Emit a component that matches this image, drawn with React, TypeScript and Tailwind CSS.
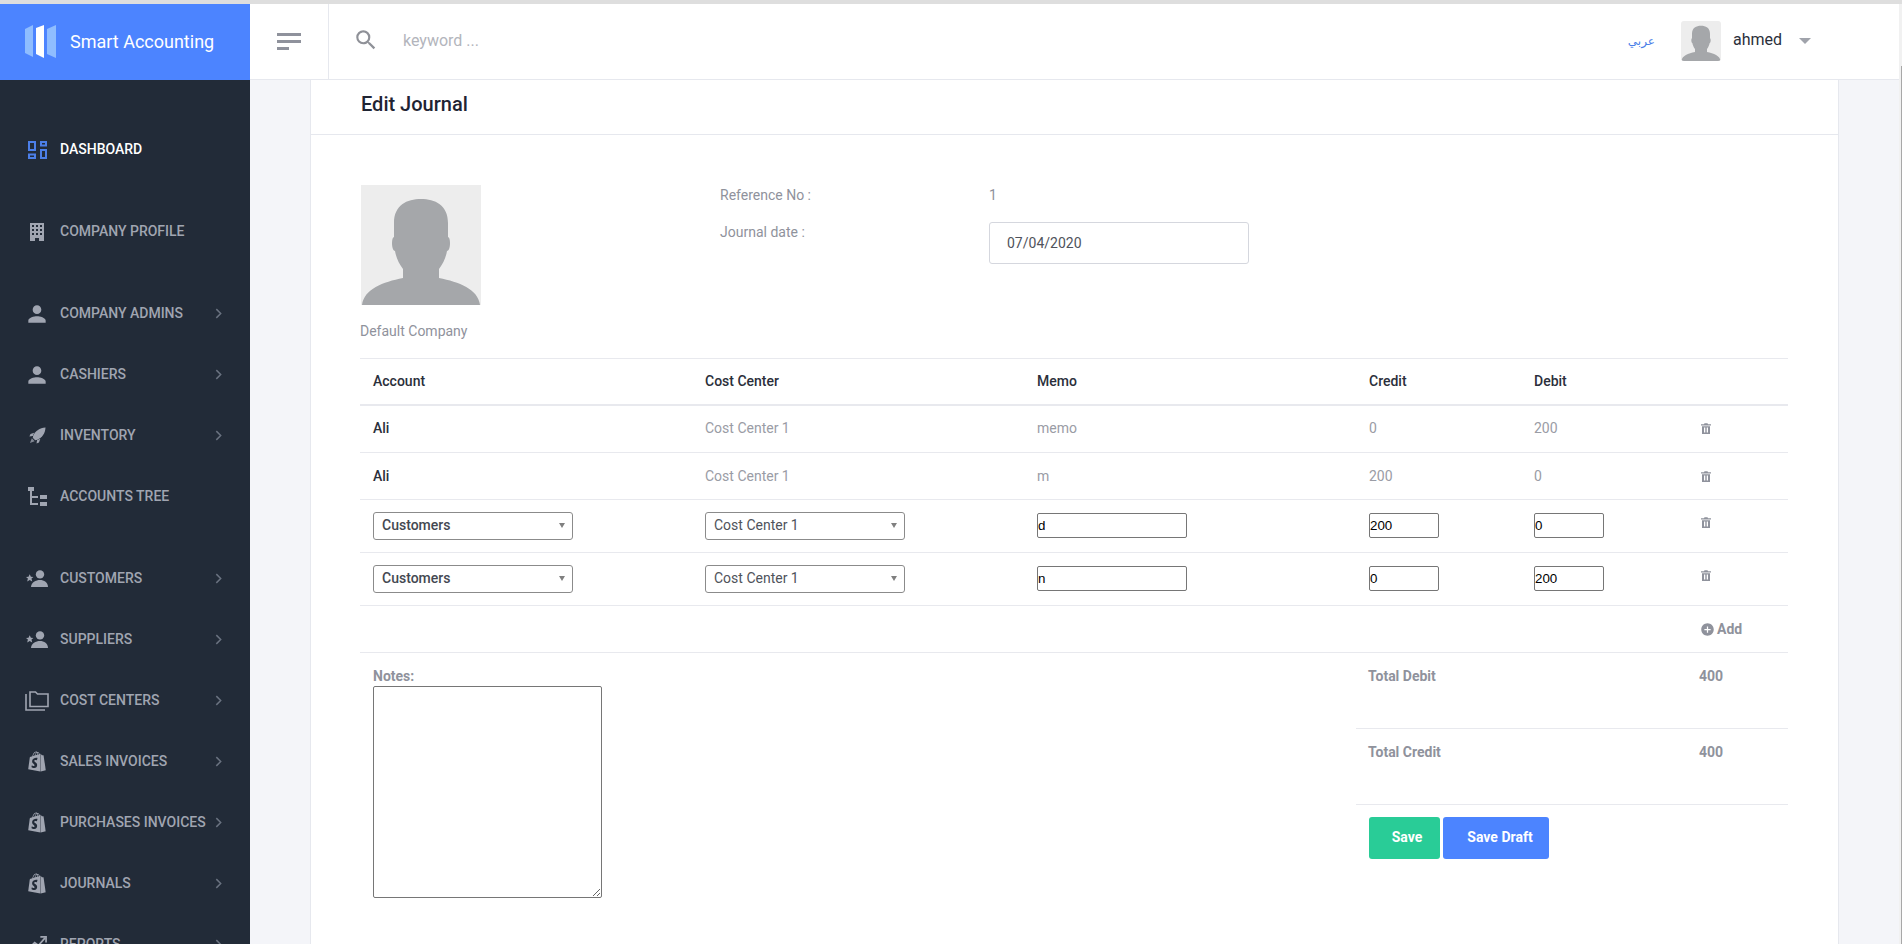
import React, { FunctionComponent, ReactNode } from "react";
import { FaShopify } from "react-icons/fa";
import { MdAddCircle, MdPerson, MdSearch } from "react-icons/md";

const Silhouette: FunctionComponent<{ className: string }> = ({ className }) => (
  <svg viewBox="0 0 120 120" className={className}>
    <rect width="120" height="120" fill="#ededed" />
    <path
      d="M1 120C3 104 22 97 42 93V84C38 79 35 72 34 66C32 66 31 62 31 58C31 54 32 52 33 52V38C33 20 46 14 60 14C74 14 87 20 87 38V52C88 52 89 54 89 58C89 62 88 66 86 66C85 72 82 79 78 84V93C98 97 117 104 119 120Z"
      fill="#a5a7aa"
    />
  </svg>
);

const DashIcon = () => (
  <svg viewBox="0 0 19 18" className="w-[19px] h-[18px]" fill="none" stroke="#4c7fe8" strokeWidth="2">
    <rect x="1" y="1" width="6" height="8" />
    <rect x="13" y="1" width="5" height="3.5" />
    <rect x="1" y="13.5" width="6" height="3.5" />
    <rect x="13" y="9" width="5" height="8" />
  </svg>
);

const BuildingIcon = () => (
  <svg viewBox="0 0 14 18" className="w-[14px] h-[18px]" fill="#a0a5b1">
    <path
      fillRule="evenodd"
      d="M0 0H14V18H9V15H5V18H0ZM2 2V4H4V2ZM6 2V4H8V2ZM10 2V4H12V2ZM2 6V8H4V6ZM6 6V8H8V6ZM10 6V8H12V6ZM2 10V12H4V10ZM6 10V12H8V10ZM10 10V12H12V10Z"
    />
  </svg>
);

const RocketIcon = () => (
  <svg viewBox="0 0 18 18" className="w-[17px] h-[17px]" fill="#a0a5b1">
    <path d="M17.5 0.5C11 1 7 4 4.5 9L4 11.5L6.5 14L9 13.5C14 11 17 7 17.5 0.5Z" />
    <path d="M5.5 6L1.5 7.5L0.5 10L4 9.5Z" />
    <path d="M12 12.5L10.5 16.5L8 17.5L8.5 14Z" />
    <path d="M1 17L3 12L6 15Z" opacity="0.75" />
  </svg>
);

const TreeIcon = () => (
  <svg viewBox="0 0 19 19" className="w-[19px] h-[19px]" fill="#a0a5b1">
    <rect x="0" y="0" width="6" height="4" />
    <rect x="2" y="4" width="2" height="14" />
    <rect x="2" y="9" width="8" height="2" />
    <rect x="2" y="16" width="8" height="2" />
    <rect x="12" y="8" width="7" height="4" />
    <rect x="12" y="15" width="7" height="4" />
  </svg>
);

const StarPersonIcon = () => (
  <svg viewBox="0 0 22 17" className="w-[22px] h-[17px]" fill="#a0a5b1">
    <circle cx="14" cy="4.4" r="4.2" />
    <path d="M5 17C5 12.5 10 10 14 10C18 10 22 12.5 22 17Z" />
    <path d="M3.7 4.2L4.9 6.7L7.4 6.9L5.5 8.6L6.2 11.4L3.7 9.9L1.2 11.4L1.9 8.6L0 6.9L2.5 6.7Z" />
  </svg>
);

const FolderIcon = () => (
  <svg viewBox="0 0 24 20" className="w-[24px] h-[20px]" fill="none" stroke="#a0a5b1" strokeWidth="1.6">
    <path d="M1 3V19H20" />
    <path d="M5 15.5V1H10.5L12.5 3H23V15.5Z" />
  </svg>
);

const ReportsIcon = () => (
  <svg viewBox="0 0 20 20" className="w-[19px] h-[19px]" fill="none" stroke="#a0a5b1" strokeWidth="1.8">
    <path d="M1 14L7 8L11 11L18 3" />
    <path d="M13 2H19V8" />
    <rect x="14" y="13" width="4" height="7" fill="#a0a5b1" stroke="none" />
  </svg>
);

const PersonIcon = () => <MdPerson className="w-[26px] h-[26px] text-[#a0a5b1] shrink-0" />;
const ShopIcon = () => <FaShopify className="w-[18px] h-[21px] text-[#a0a5b1]" />;

const Chevron = () => (
  <svg viewBox="0 0 8 12" className="w-[7px] h-[11px]" fill="none" stroke="#6a7280" strokeWidth="1.7">
    <path d="M1.5 1L6.5 6L1.5 11" />
  </svg>
);

type NavItem = { label: string; icon: ReactNode; arrow?: boolean; gap?: boolean; active?: boolean };

const navItems: NavItem[] = [
  { label: "Dashboard", icon: <DashIcon />, gap: true, active: true },
  { label: "Company Profile", icon: <BuildingIcon />, gap: true },
  { label: "Company Admins", icon: <PersonIcon />, arrow: true },
  { label: "Cashiers", icon: <PersonIcon />, arrow: true },
  { label: "Inventory", icon: <RocketIcon />, arrow: true },
  { label: "Accounts Tree", icon: <TreeIcon />, gap: true },
  { label: "Customers", icon: <StarPersonIcon />, arrow: true },
  { label: "Suppliers", icon: <StarPersonIcon />, arrow: true },
  { label: "Cost Centers", icon: <FolderIcon />, arrow: true },
  { label: "Sales Invoices", icon: <ShopIcon />, arrow: true },
  { label: "Purchases Invoices", icon: <ShopIcon />, arrow: true },
  { label: "Journals", icon: <ShopIcon />, arrow: true },
  { label: "Reports", icon: <ReportsIcon />, arrow: true },
];

const Sidebar = () => (
  <aside className="w-[250px] shrink-0 bg-[#222b38] pt-[39px] overflow-hidden">
    {navItems.map((item) => (
      <div key={item.label} className={`h-[61px] flex items-center ${item.gap ? "mb-[21px]" : ""}`}>
        <span className="w-[60px] shrink-0 flex justify-center pl-[20px] pr-[6px]">{item.icon}</span>
        <span
          className={`text-[14px] font-medium uppercase whitespace-nowrap ${
            item.active ? "text-white" : "text-[#a0a5b1]"
          }`}
        >
          {item.label}
        </span>
        {item.arrow && (
          <span className="ml-auto mr-[28px]">
            <Chevron />
          </span>
        )}
      </div>
    ))}
  </aside>
);

const Header = () => (
  <header className="h-[76px] shrink-0 flex bg-white">
    <div className="w-[250px] shrink-0 bg-[#4c84ff] flex items-center pl-[25px] pb-[1px]">
      <svg viewBox="0 0 31 33" className="w-[31px] h-[33px]">
        <path d="M0 4L8 0V32L0 28Z" fill="#8fbdff" />
        <path d="M11 3L19 0V33L11 29Z" fill="#ffffff" />
        <path d="M22 4L31 0V33L22 29Z" fill="#8fbdff" />
      </svg>
      <span className="ml-[14px] text-[18px] text-white whitespace-nowrap">Smart Accounting</span>
    </div>
    <div className="flex-1 flex border-b border-[#e6e8ee]">
      <div className="w-[79px] shrink-0 border-r border-[#e6e8ee] flex items-center justify-center pr-[1px] pb-[1px]">
        <span className="flex flex-col gap-[4px]">
          <span className="block w-[24px] h-[3px] bg-[#8f929c]" />
          <span className="block w-[24px] h-[3px] bg-[#8f929c]" />
          <span className="block w-[12px] h-[3px] bg-[#8f929c]" />
        </span>
      </div>
      <div className="flex-1 flex items-center pl-[24px] pb-[4px]">
        <MdSearch className="w-[26px] h-[26px] text-[#8f9198]" />
        <span className="ml-[24px] pt-[2px] text-[16px] text-[#b3b5bc]">keyword ...</span>
      </div>
      <div className="flex items-center pb-[2px]">
        <span className="text-[12px] text-[#4c7fe8] font-['DejaVu_Sans',sans-serif]">عربي</span>
        <Silhouette className="ml-[26px] w-[40px] h-[40px] rounded-[3px]" />
        <span className="ml-[12px] text-[16px] text-[#2b2f3b] pb-[1px]">ahmed</span>
        <span className="ml-[17px] w-0 h-0 border-x-[6px] border-x-transparent border-t-[6px] border-t-[#a0a3ab]" />
        <span className="w-[88px]" />
      </div>
    </div>
  </header>
);

const Select: FunctionComponent<{ value: string; dark?: boolean }> = ({ value, dark }) => (
  <div
    className={`w-[200px] h-[28px] border border-[#8b8b8b] rounded-[3px] bg-white flex items-center justify-between pl-[8px] pr-[7px] text-[14px] ${
      dark ? "text-[#444851] font-medium" : "text-[#4f535b]"
    }`}
  >
    <span>{value}</span>
    <span className="w-0 h-0 border-x-[3.5px] border-x-transparent border-t-[5px] border-t-[#808080]" />
  </div>
);

const Field: FunctionComponent<{ value: string; width: string }> = ({ value, width }) => (
  <input
    readOnly
    value={value}
    className={`${width} h-[25px] block border border-[#767676] rounded-[2px] px-0 text-[13.33px] text-black font-['Liberation_Sans',sans-serif] outline-none`}
  />
);

const Trash = () => (
  <svg viewBox="0 0 10 11" className="w-[10px] h-[11px]" fill="#8f929c">
    <path d="M0 1.2H3L3.5 0.2H6.5L7 1.2H10V2.6H0Z" />
    <path fillRule="evenodd" d="M1 3.2H9V11H1ZM3 4.6V9.6H4.3V4.6ZM5.7 4.6V9.6H7V4.6Z" />
  </svg>
);

const StaticRow: FunctionComponent<{ memo: string; credit: string; debit: string; height: string }> = ({
  memo,
  credit,
  debit,
  height,
}) => (
  <tr className={`${height} border-b border-[#e8e9ee] text-[14px] text-[#9a9ca5]`}>
    <td className="pl-[13px] font-medium text-[#2b2f3b]">Ali</td>
    <td className="pl-[13px]">Cost Center 1</td>
    <td className="pl-[13px]">{memo}</td>
    <td className="pl-[13px]">{credit}</td>
    <td className="pl-[13px]">{debit}</td>
    <td className="pl-[13px]">
      <Trash />
    </td>
  </tr>
);

const InputRow: FunctionComponent<{ memo: string; credit: string; debit: string }> = ({ memo, credit, debit }) => (
  <tr className="h-[53px] border-b border-[#e8e9ee]">
    <td className="pl-[13px] pb-[1px]">
      <Select value="Customers" dark />
    </td>
    <td className="pl-[13px] pb-[1px]">
      <Select value="Cost Center 1" />
    </td>
    <td className="pl-[13px] pb-[1px]">
      <Field value={memo} width="w-[150px]" />
    </td>
    <td className="pl-[13px] pb-[1px]">
      <Field value={credit} width="w-[70px]" />
    </td>
    <td className="pl-[13px] pb-[1px]">
      <Field value={debit} width="w-[70px]" />
    </td>
    <td className="pl-[13px] align-top pt-[17px]">
      <Trash />
    </td>
  </tr>
);

const JournalTable = () => (
  <table className="w-full table-fixed border-collapse">
    <colgroup>
      <col className="w-[332px]" />
      <col className="w-[332px]" />
      <col className="w-[332px]" />
      <col className="w-[165px]" />
      <col className="w-[167px]" />
      <col />
    </colgroup>
    <thead>
      <tr className="h-[46px] border-t border-[#e8e9ee] border-b-2 text-left text-[14px] font-medium text-[#2b2f3b]">
        <th className="pl-[13px] font-medium">Account</th>
        <th className="pl-[13px] font-medium">Cost Center</th>
        <th className="pl-[13px] font-medium">Memo</th>
        <th className="pl-[13px] font-medium">Credit</th>
        <th className="pl-[13px] font-medium">Debit</th>
        <th />
      </tr>
    </thead>
    <tbody>
      <StaticRow memo="memo" credit="0" debit="200" height="h-[48px]" />
      <StaticRow memo="m" credit="200" debit="0" height="h-[47px]" />
      <InputRow memo="d" credit="200" debit="0" />
      <InputRow memo="n" credit="0" debit="200" />
      <tr className="h-[47px] border-b border-[#e8e9ee]">
        <td colSpan={5} />
        <td className="pl-[12px]">
          <span className="flex items-center gap-[2px] text-[14px] font-bold text-[#8f929c]">
            <MdAddCircle className="w-[15px] h-[15px]" />
            Add
          </span>
        </td>
      </tr>
    </tbody>
  </table>
);

const Totals = () => (
  <div className="w-[432px] text-[14px] font-bold text-[#8f929c]">
    <div className="h-[76px] border-b border-[#e8e9ee] flex pt-[13px]">
      <span className="w-[343px] pl-[12px]">Total Debit</span>
      <span>400</span>
    </div>
    <div className="h-[76px] border-b border-[#e8e9ee] flex pt-[13px]">
      <span className="w-[343px] pl-[12px]">Total Credit</span>
      <span>400</span>
    </div>
    <div className="flex gap-[3px] pl-[13px] pt-[12px]">
      <button className="w-[71px] h-[42px] rounded-[3px] bg-[#29cc97] text-white text-[14px] font-bold pl-[5px] pb-[1px]">
        Save
      </button>
      <button className="w-[106px] h-[42px] rounded-[3px] bg-[#4c84ff] text-white text-[14px] font-bold pl-[8px] pb-[1px]">
        Save Draft
      </button>
    </div>
  </div>
);

const EditJournal = () => (
  <section className="w-[1529px] shrink-0 bg-white border-x border-[#e6e8ee]">
    <div className="h-[55px] border-b border-[#e6e8ee] pl-[50px] flex items-center text-[20px] font-medium text-[#1f2433] pb-[7px]">
      Edit Journal
    </div>
    <div className="pl-[49px] pr-[50px]">
      <div className="flex h-[223px] pt-[50px]">
        <div className="w-[360px] shrink-0">
          <Silhouette className="w-[120px] h-[120px] ml-[1px]" />
          <p className="mt-[16px] text-[14px] text-[#8f929c]">Default Company</p>
        </div>
        <div className="text-[14px] text-[#8f929c]">
          <div className="flex h-[19px]">
            <span className="w-[269px]">Reference No :</span>
            <span>1</span>
          </div>
          <div className="flex mt-[18px]">
            <span className="w-[269px]">Journal date :</span>
            <div className="w-[260px] h-[42px] border border-[#d5d7de] rounded-[3px] flex items-center pl-[17px] text-[#4f535b]">
              07/04/2020
            </div>
          </div>
        </div>
      </div>
      <JournalTable />
      <div className="flex justify-between h-[292px]">
        <div className="pl-[13px] pt-[13px]">
          <p className="text-[14px] font-bold text-[#8f929c] leading-[20px]">Notes:</p>
          <textarea readOnly className="block w-[229px] h-[212px] border border-[#767676] rounded-[2px] outline-none" />
        </div>
        <Totals />
      </div>
    </div>
  </section>
);

const App: FunctionComponent = () => (
  <div className="h-screen overflow-hidden flex flex-col bg-[#f4f5f9] font-['Roboto',sans-serif]">
    <div className="h-[4px] shrink-0 bg-[#dedede]" />
    <div className="flex-1 min-h-0 flex">
      <div className="flex-1 min-w-0 flex flex-col">
        <Header />
        <div className="flex-1 min-h-0 flex overflow-hidden">
          <Sidebar />
          <main className="pl-[60px]">
            <EditJournal />
          </main>
        </div>
      </div>
      <div className="w-[3px] shrink-0 bg-[#f1f1f1] pt-[62px]">
        <div className="h-full ml-[2px] bg-[#a8a8a8]" />
      </div>
    </div>
  </div>
);

export default App;
